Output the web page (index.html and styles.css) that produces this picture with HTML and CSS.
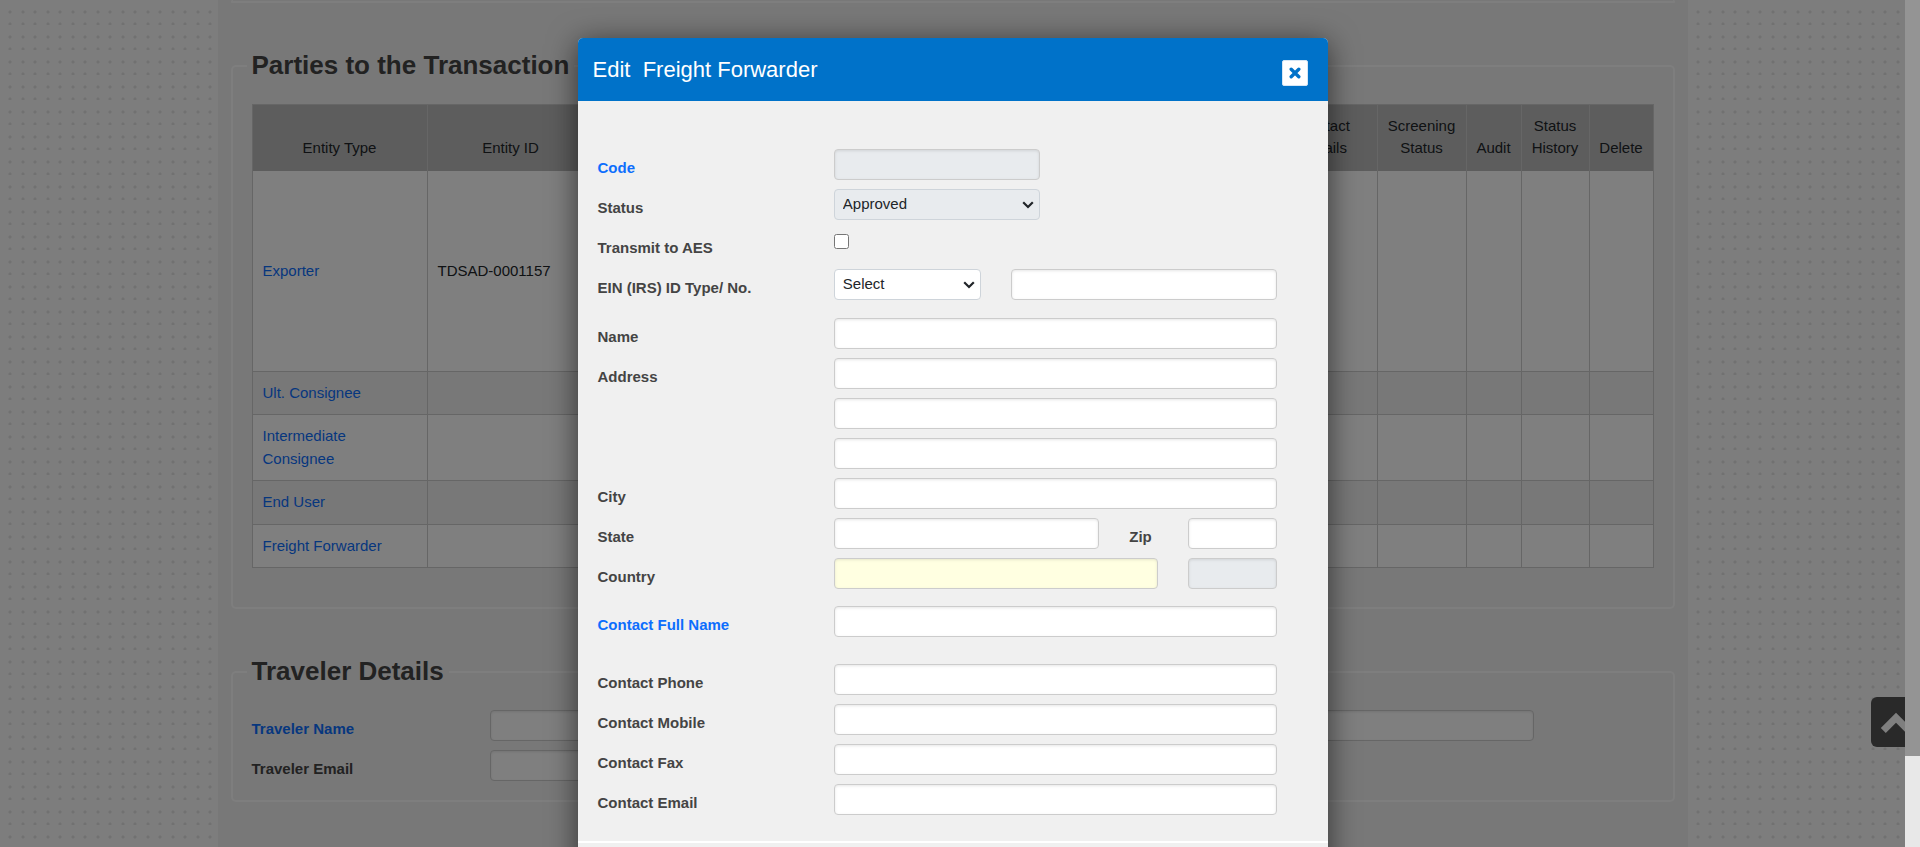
FILE: index.html
```html
<!DOCTYPE html>
<html lang="en">
<head>
<meta charset="utf-8">
<title>Edit Freight Forwarder</title>
<link rel="stylesheet" href="styles.css">
</head>
<body>
<div class="app">
  <div class="viewport">
    <main class="page">
      <div class="panel panel-end"></div>

      <fieldset class="panel panel-parties">
        <legend>Parties to the Transaction</legend>
        <table class="parties">
          <colgroup>
            <col class="col-type"><col class="col-id"><col><col class="col-contact"><col class="col-screening"><col class="col-audit"><col class="col-history"><col class="col-delete">
          </colgroup>
          <thead>
            <tr><th>Entity Type</th><th>Entity ID</th><th></th><th>Contact<br>Details</th><th>Screening<br>Status</th><th>Audit</th><th>Status<br>History</th><th>Delete</th></tr>
          </thead>
          <tbody>
            <tr class="tall"><td><a href="#">Exporter</a></td><td>TDSAD-0001157</td><td></td><td></td><td></td><td></td><td></td><td></td></tr>
            <tr><td><a href="#">Ult. Consignee</a></td><td></td><td></td><td></td><td></td><td></td><td></td><td></td></tr>
            <tr><td><a href="#">Intermediate Consignee</a></td><td></td><td></td><td></td><td></td><td></td><td></td><td></td></tr>
            <tr><td><a href="#">End User</a></td><td></td><td></td><td></td><td></td><td></td><td></td><td></td></tr>
            <tr><td><a href="#">Freight Forwarder</a></td><td></td><td></td><td></td><td></td><td></td><td></td><td></td></tr>
          </tbody>
        </table>
      </fieldset>

      <fieldset class="panel">
        <legend>Traveler Details</legend>
        <div class="rows">
          <div class="row">
            <label class="span-2" for="traveler-name"><a href="#">Traveler Name</a></label>
            <input class="field span-9" id="traveler-name" type="text">
          </div>
          <div class="row">
            <label class="span-2" for="traveler-email">Traveler Email</label>
            <input class="field span-4" id="traveler-email" type="text">
          </div>
        </div>
      </fieldset>
    </main>

    <button class="to-top" type="button" aria-label="Back to top">
      <svg viewBox="0 0 50 50" width="50" height="50"><path d="M12.3 33.5 25 20.8 37.7 33.5" fill="none" stroke="#fff" stroke-width="7"/></svg>
    </button>

    <div class="backdrop">
      <div class="modal" role="dialog" aria-labelledby="modal-title">
        <header class="modal-header">
          <h2 id="modal-title">Edit&nbsp; Freight Forwarder</h2>
          <button class="close" type="button" aria-label="Close">
            <svg viewBox="0 0 12 12" width="12" height="12"><path d="M2.2 2.2 9.8 9.8M9.8 2.2 2.2 9.8" fill="none" stroke="#0072c9" stroke-width="3.4" stroke-linecap="round"/></svg>
          </button>
        </header>
        <form class="modal-body">
          <div class="rows rows-entity">
            <div class="row">
              <label class="span-4" for="code"><a href="#">Code</a></label>
              <input class="field span-4" id="code" type="text" readonly>
            </div>
            <div class="row">
              <label class="span-4" for="status">Status</label>
              <select class="field span-4" id="status" disabled><option>Approved</option></select>
            </div>
            <div class="row">
              <label class="span-4" for="aes">Transmit to AES</label>
              <input class="check" id="aes" type="checkbox">
            </div>
            <div class="row">
              <label class="span-4" for="ein-type">EIN (IRS) ID Type/ No.</label>
              <select class="field span-3" id="ein-type"><option>Select</option></select>
              <input class="field span-5" type="text" aria-label="EIN number">
            </div>
          </div>
          <div class="rows">
            <div class="row">
              <label class="span-4" for="name">Name</label>
              <input class="field span-8" id="name" type="text">
            </div>
            <div class="row">
              <label class="span-4" for="address">Address</label>
              <input class="field span-8" id="address" type="text">
            </div>
            <div class="row">
              <input class="field span-8 after-label" type="text" aria-label="Address line 2">
            </div>
            <div class="row">
              <input class="field span-8 after-label" type="text" aria-label="Address line 3">
            </div>
            <div class="row">
              <label class="span-4" for="city">City</label>
              <input class="field span-8" id="city" type="text">
            </div>
            <div class="row">
              <label class="span-4" for="state">State</label>
              <input class="field span-5" id="state" type="text">
              <label for="zip">Zip</label>
              <input class="field span-2" id="zip" type="text">
            </div>
            <div class="row">
              <label class="span-4" for="country">Country</label>
              <input class="field span-6 required" id="country" type="text">
              <input class="field span-2" type="text" aria-label="Country code" readonly>
            </div>
          </div>
          <div class="rows">
            <div class="row">
              <label class="span-4" for="contact"><a href="#">Contact Full Name</a></label>
              <input class="field span-8" id="contact" type="text">
            </div>
          </div>
          <div class="rows rows-contact">
            <div class="row">
              <label class="span-4" for="phone">Contact Phone</label>
              <input class="field span-8" id="phone" type="text">
            </div>
            <div class="row">
              <label class="span-4" for="mobile">Contact Mobile</label>
              <input class="field span-8" id="mobile" type="text">
            </div>
            <div class="row">
              <label class="span-4" for="fax">Contact Fax</label>
              <input class="field span-8" id="fax" type="text">
            </div>
            <div class="row">
              <label class="span-4" for="email">Contact Email</label>
              <input class="field span-8" id="email" type="text">
            </div>
          </div>
        </form>
        <footer class="modal-footer"></footer>
      </div>
    </div>
  </div>
  <div class="scrollbar"><div class="scroll-thumb"></div></div>
</div>
</body>
</html>
```

FILE: styles.css
```css
* { box-sizing: border-box; }

body {
  margin: 0;
  font: 15px/1.5 "Liberation Sans", Arial, sans-serif;
  color: #212529;
}

a { color: #0d6efd; text-decoration: none; }

.app { display: flex; height: 100vh; overflow: hidden; }

.viewport {
  flex: 1;
  position: relative;
  overflow: hidden;
  background-color: #fafafa;
  background-image:
    radial-gradient(circle at 10px 12px, #e2e2e2 1px, transparent 2px),
    radial-gradient(circle at 23px 12px, #e2e2e2 1px, transparent 2px),
    radial-gradient(circle at 10px 24px, #e2e2e2 1px, transparent 2px),
    radial-gradient(circle at 23px 24px, #e2e2e2 1px, transparent 2px);
  background-size: 25px 25px;
}

.page {
  max-width: 1470px;
  min-height: 100%;
  margin: 0 auto;
  padding: 0 13px;
  background: #f0f0f0;
}

.panel {
  margin: 0 0 43px;
  padding: 0 19px 19px;
  border: 2px solid #fcfcfc;
  border-radius: 5px;
  min-width: 0;
}
.panel-end { height: 3px; padding: 0; border-top: 0; }
.panel-parties { padding-bottom: 39px; }

legend {
  margin: 0 0 19px -5px;
  padding: 0 5px;
  font-size: 26px;
  font-weight: bold;
  color: #444;
}

.parties {
  width: 100%;
  table-layout: fixed;
  border-collapse: collapse;
}
.parties th {
  padding: 10px 9px 12px;
  background: #bababa;
  border: 1px solid #ccc;
  border-bottom: 0;
  font-weight: normal;
  line-height: 22px;
  vertical-align: bottom;
}
.parties td {
  padding: 10px;
  border: 1px solid #ccc;
  border-top: 0;
}
.parties tbody tr:nth-child(odd) { background: #fff; }
.parties .tall { height: 200px; }
.col-type { width: 175px; }
.col-id { width: 167px; }
.col-contact { width: 106px; }
.col-screening { width: 89px; }
.col-audit { width: 55px; }
.col-history { width: 68px; }
.col-delete { width: 64px; }

.rows { display: grid; gap: 9px; }
.row {
  display: grid;
  grid-template-columns: repeat(12, minmax(0, 1fr));
  column-gap: 30px;
  min-height: 31px;
  align-items: start;
}
.span-2 { grid-column: span 2; }
.span-3 { grid-column: span 3; }
.span-4 { grid-column: span 4; }
.span-5 { grid-column: span 5; }
.span-6 { grid-column: span 6; }
.span-8 { grid-column: span 8; }
.span-9 { grid-column: span 9; }
.after-label { grid-column: 5 / span 8; }

label {
  padding-top: 8px;
  font-weight: bold;
  color: #444;
}

.field {
  width: 100%;
  height: 31px;
  padding: 0 8px;
  border: 1px solid #ccc;
  border-radius: 4px;
  background-color: #fff;
  font: inherit;
  color: #212529;
}
input.field { box-shadow: inset 0 1px 3px rgba(0, 0, 0, .1); }
select.field {
  appearance: none;
  border-color: #ced4da;
  background-image: url("data:image/svg+xml,%3Csvg xmlns='http://www.w3.org/2000/svg' viewBox='0 0 12 8'%3E%3Cpath d='M1.2 1.2 6 6 10.8 1.2' fill='none' stroke='%23212529' stroke-width='2.2'/%3E%3C/svg%3E");
  background-repeat: no-repeat;
  background-position: right 5px center;
  background-size: 12px 8px;
}
.field[readonly], .field:disabled { background-color: #e8ebee; opacity: 1; }
.field.required { background-color: #ffffe1; }
.check { width: 15px; height: 15px; margin: 5px 0 0; }

.to-top {
  position: absolute;
  right: -16px;
  bottom: 100px;
  width: 50px;
  height: 50px;
  padding: 0;
  border: 0;
  border-radius: 6px;
  background: #525252;
}
.to-top svg { display: block; }

.backdrop {
  position: absolute;
  inset: 0;
  display: flex;
  justify-content: center;
  align-items: flex-start;
  padding-top: 38px;
  overflow: hidden;
  background: rgba(0, 0, 0, .5);
}

.modal {
  width: 750px;
  border-radius: 5px 5px 0 0;
  background: #f0f0f0;
  box-shadow: 0 5px 30px rgba(0, 0, 0, .6);
}
.modal-header {
  display: flex;
  justify-content: space-between;
  padding: 15px 20px 15px 15px;
  border-radius: 5px 5px 0 0;
  background: #0072c9;
}
.modal-header h2 {
  margin: 0;
  font-size: 22px;
  font-weight: normal;
  color: #fff;
}
.close {
  display: flex;
  align-items: center;
  justify-content: center;
  width: 26px;
  height: 26px;
  margin-top: 7px;
  padding: 0;
  border: 1px solid #d5e6f5;
  border-radius: 2px;
  background: #fff;
}
.modal-body {
  display: grid;
  gap: 17px;
  padding: 48px 51px 26px 20px;
}
.rows-entity { padding-bottom: 1px; }
.rows-contact { margin-top: 10px; }
.modal-footer {
  height: 80px;
  border-top: 2px solid #fff;
}

.scrollbar { width: 15px; background: #e8e8e8; }
.scroll-thumb { height: 756px; background: #949494; }
```
